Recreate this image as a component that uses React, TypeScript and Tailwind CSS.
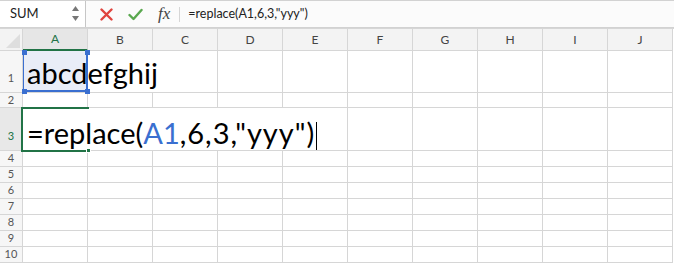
const COLS = ["A", "B", "C", "D", "E", "F", "G", "H", "I", "J"];
const SMALL_ROWS = [4, 5, 6, 7, 8, 9, 10];

const sheetFont = { fontFamily: "Lato, 'Open Sans', sans-serif" };

function Toolbar() {
  return (
    <div className="flex h-[28px] border-t border-b border-[#d2d2d2] bg-[#fbfbfb]" style={sheetFont}>
      <div className="relative flex w-[86px] items-center border-r border-[#c6c6c6] bg-white pl-[10px] text-[13px] text-[#222]">
        SUM
        <div className="absolute right-[6px] top-[5px] flex flex-col gap-[5px]">
          <svg width="7" height="5" viewBox="0 0 7 5">
            <path d="M3.5 0 L7 5 L0 5 Z" fill="#777" />
          </svg>
          <svg width="7" height="5" viewBox="0 0 7 5">
            <path d="M0 0 L7 0 L3.5 5 Z" fill="#777" />
          </svg>
        </div>
      </div>
      <div className="flex items-center pl-[14px]">
        <svg width="13" height="13" viewBox="0 0 13 13">
          <path d="M1.5 1.5 L11.5 11.5 M11.5 1.5 L1.5 11.5" stroke="#e0443e" strokeWidth="2.4" strokeLinecap="round" />
        </svg>
        <svg className="ml-[15px]" width="15" height="13" viewBox="0 0 15 13">
          <path d="M1.5 7 L5.5 11 L13.5 2" stroke="#5aa84f" strokeWidth="2.4" fill="none" strokeLinecap="round" strokeLinejoin="round" />
        </svg>
        <span
          className="ml-[15px] text-[17px] italic text-[#444]"
          style={{ fontFamily: "'Liberation Serif', serif" }}
        >
          fx
        </span>
        <div className="ml-[9px] h-[15px] w-px bg-[#d6d6d6]" />
        <span className="ml-[8px] text-[12.5px] text-[#222]">=replace(A1,6,3,"yyy")</span>
      </div>
    </div>
  );
}

function RowHead({ n, h, tall, active }: { n: number; h: string; tall?: boolean; active?: boolean }) {
  return (
    <div
      className={`flex w-[23px] shrink-0 justify-center border-r border-b border-[#d6d6d6] text-[11px] ${h} ${
        tall ? "items-end pb-[6px]" : "items-center"
      } ${active ? "bg-[#e8e8e8] text-[#217346]" : "bg-[#f6f6f6] text-[#555]"}`}
    >
      {n}
    </div>
  );
}

function Cell({ className = "" }: { className?: string }) {
  return <div className={`shrink-0 border-r border-b border-[#d6d6d6] ${className}`} />;
}

function Corner({ pos }: { pos: string }) {
  return <div className={`absolute h-[5px] w-[5px] bg-[#3a6fd0] ${pos}`} />;
}

export default function App() {
  return (
    <div className="h-[264px] w-[674px] overflow-hidden bg-white" style={sheetFont}>
      <Toolbar />
      <div className="h-px bg-[#d6d6d6]" />

      {/* column headers */}
      <div className="flex h-[22px]">
        <div className="relative w-[23px] shrink-0 border-r border-b border-[#d6d6d6] bg-[#f3f3f3]">
          <svg className="absolute bottom-[2px] right-[2px]" width="14" height="14" viewBox="0 0 14 14">
            <path d="M14 0 L14 14 L0 14 Z" fill="#dedede" />
          </svg>
        </div>
        {COLS.map((c, i) => (
          <div
            key={c}
            className={`flex w-[65px] shrink-0 items-center justify-center border-r border-[#d6d6d6] text-[12px] ${
              i === 0
                ? "border-b-2 border-b-[#217346] bg-[#e6e6e6] text-[#217346]"
                : "border-b bg-[#f3f3f3] text-[#444]"
            }`}
          >
            {c}
          </div>
        ))}
      </div>

      {/* row 1 */}
      <div className="flex h-[42px]">
        <RowHead n={1} h="h-[42px]" tall />
        <div className="relative z-10 h-[42px] w-[65px] shrink-0 border-b border-[#d6d6d6] bg-[#e9edf7]">
          <div className="absolute inset-0 border-r-2 border-b-2 border-l border-[#3a6fd0]" />
          <Corner pos="-left-[1px] -top-[1px]" />
          <Corner pos="-right-[2px] -top-[1px]" />
          <Corner pos="-left-[1px] -bottom-[2px]" />
          <Corner pos="-right-[2px] -bottom-[2px]" />
          <span className="absolute bottom-[5px] left-[4px] whitespace-nowrap text-[29px] leading-none text-black">
            abcdefghij
          </span>
        </div>
        <Cell className="h-[42px] w-[130px]" />
        {COLS.slice(3).map((c) => (
          <Cell key={c} className="h-[42px] w-[65px]" />
        ))}
      </div>

      {/* row 2 */}
      <div className="flex h-[15px]">
        <RowHead n={2} h="h-[15px]" />
        {COLS.map((c) => (
          <Cell key={c} className="h-[15px] w-[65px]" />
        ))}
      </div>

      {/* row 3, cell A3 in edit mode */}
      <div className="flex h-[43px]">
        <RowHead n={3} h="h-[43px]" tall active />
        <div className="relative z-10 h-[43px] w-[325px] shrink-0 border-r border-b border-[#d6d6d6]">
          <div className="absolute -left-[2px] -top-[1px] h-[45px] w-[68px] border-2 border-r-0 border-[#217346]" />
          <div className="absolute left-[62px] top-[-1px] h-[45px] w-[4px] border-y-2 border-[#217346] bg-white" />
          <div className="absolute -bottom-[3px] left-[63px] h-[5px] w-[5px] border border-white bg-[#217346]" />
          <span className="absolute bottom-[3px] left-[4px] flex items-end whitespace-nowrap text-[29px] leading-none text-black">
            =replace(<span className="text-[#3a6fd0]">A1</span>
            <span className="tracking-[1px]">,6,3,"yyy")</span>
            <span className="mb-[-3px] ml-[1px] h-[28px] w-px bg-black" />
          </span>
        </div>
        {COLS.slice(5).map((c) => (
          <Cell key={c} className="h-[43px] w-[65px]" />
        ))}
      </div>

      {SMALL_ROWS.map((r) => (
        <div key={r} className="flex h-[16px]">
          <RowHead n={r} h="h-[16px]" />
          {COLS.map((c) => (
            <Cell key={c} className="h-[16px] w-[65px]" />
          ))}
        </div>
      ))}
    </div>
  );
}
